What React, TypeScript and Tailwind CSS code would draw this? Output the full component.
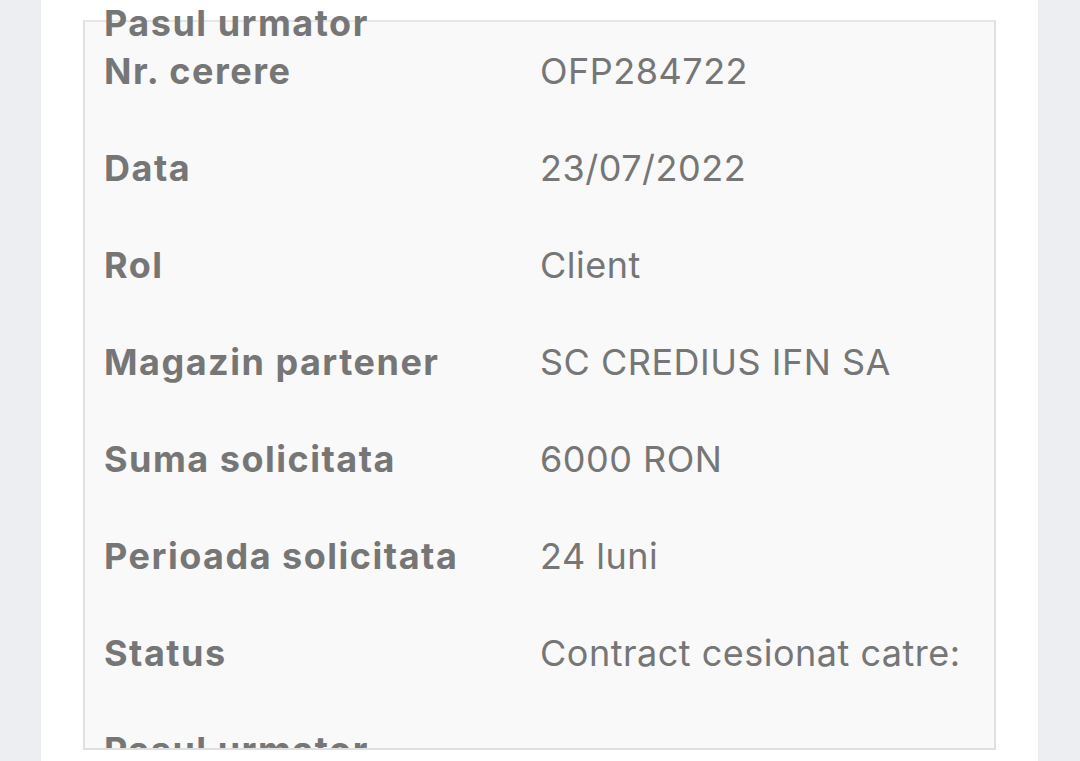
import React from "react";

const rows = [
  { label: "Nr. cerere", value: "OFP284722" },
  { label: "Data", value: "23/07/2022" },
  { label: "Rol", value: "Client" },
  { label: "Magazin partener", value: "SC CREDIUS IFN SA" },
  { label: "Suma solicitata", value: "6000 RON" },
  { label: "Perioada solicitata", value: "24 luni" },
  { label: "Status", value: "Contract cesionat catre:" },
  { label: "Pasul urmator", value: "" },
];

const App = () => {
  return (
    <div
      className="flex h-[761px] w-full overflow-hidden bg-[#eceef2] text-[#767676]"
      style={{ fontFamily: "Inter, 'Open Sans', sans-serif" }}
    >
      <div className="w-[41px] shrink-0" />
      <div className="flex-1 bg-white px-[42px]">
        {/* tail of the previous block, drawn over the card's top edge */}
        <div className="relative z-10 -mb-[27px] pl-[21px] text-[36px] font-bold leading-[47px] tracking-[1.5px]">
          Pasul urmator
        </div>
        <div className="h-[730px] overflow-hidden border-2 border-[#e0e0e0] border-t-[#e6e6e6] bg-[#f9f9f9] pl-[19px]">
          <div className="h-[26px]" />
          {rows.map((row, i) => (
            <div key={i} className="mb-[50px] flex text-[36px] leading-[47px]">
              <div className="w-[436px] shrink-0 font-bold tracking-[1.5px]">{row.label}</div>
              <div className="whitespace-nowrap font-normal tracking-[0.5px]">{row.value}</div>
            </div>
          ))}
        </div>
      </div>
      <div className="w-[42px] shrink-0" />
    </div>
  );
};

export default App;
